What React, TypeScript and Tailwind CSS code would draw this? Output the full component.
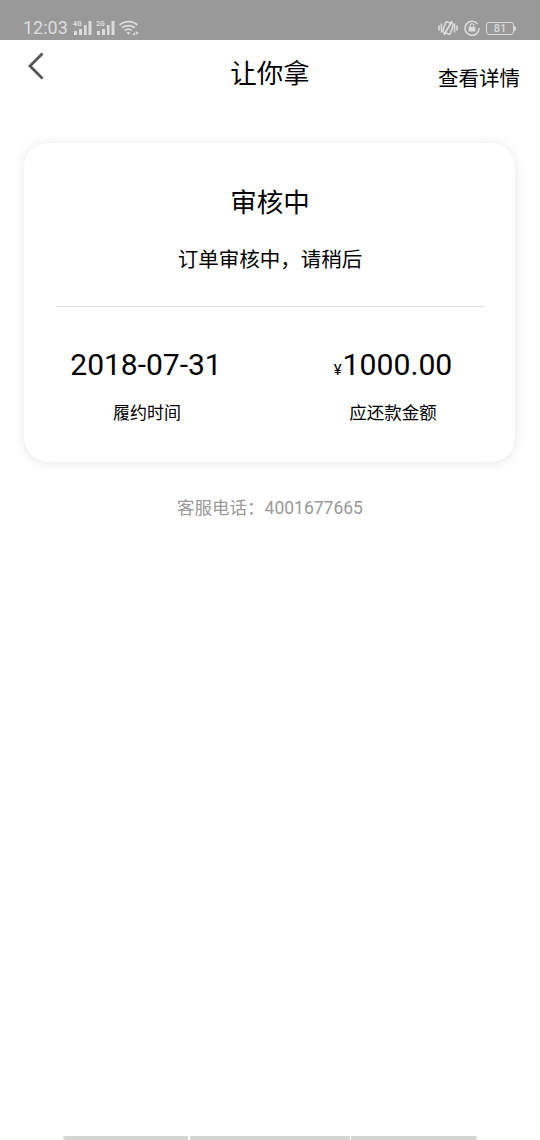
const SignalIcon = ({ label }: { label: string }) => (
  <svg width="19" height="16" viewBox="0 0 19 16" fill="#dcdcdc">
    <text x="0" y="6" fontSize="7" fontWeight="700" fontFamily="Roboto, sans-serif">{label}</text>
    <rect x="1" y="11" width="3" height="4" />
    <rect x="6" y="9" width="3" height="6" />
    <rect x="11" y="5" width="2.6" height="10" />
    <rect x="15.5" y="1" width="3" height="14" />
  </svg>
);

const WifiIcon = () => (
  <svg width="20" height="16" viewBox="0 0 20 16" fill="none" stroke="#dcdcdc" strokeWidth="1.8">
    <path d="M0.6 5C5.5 0.6 13.5 0.6 18.4 5" />
    <path d="M3.2 7.8C6.8 4.8 12.2 4.8 15.8 7.8" />
    <path d="M5.8 10.4C7.8 8.9 10.8 8.9 12.8 10.4" />
    <path d="M9.4 15l-2-2.4c1.2-.8 2.8-.8 4 0z" fill="#dcdcdc" stroke="none" />
    <path d="M13 15l3-3v3zM16.8 11l3 2-3 2z" fill="#dcdcdc" stroke="none" />
  </svg>
);

const VibrateIcon = () => (
  <svg width="20" height="16" viewBox="0 0 20 16" fill="none" stroke="#dcdcdc" strokeWidth="1.6">
    <path d="M1 5.5v5M3.5 3.5v9M16.5 3.5v9M19 5.5v5" />
    <rect x="6" y="2.5" width="8" height="11" rx="1.5" transform="rotate(18 10 8)" />
    <path d="M14 1L6 15" strokeWidth="1.8" />
  </svg>
);

const LockIcon = () => (
  <svg width="16" height="16" viewBox="0 0 16 16" fill="none">
    <path d="M13.5 4A7 7 0 1 0 15 8" stroke="#dcdcdc" strokeWidth="1.5" />
    <rect x="4.6" y="7" width="6.8" height="4.6" rx="0.6" fill="#dcdcdc" />
    <path d="M6.2 7V5.6a1.8 1.8 0 0 1 3.6 0V7" stroke="#dcdcdc" strokeWidth="1.1" />
  </svg>
);

const Battery = () => (
  <div className="flex items-center">
    <div className="w-[28px] h-[13px] rounded-[3px] border border-[#d9d9d9] flex items-center justify-center text-[11px] leading-none text-[#d9d9d9] font-medium">
      81
    </div>
    <div className="w-[2px] h-[5px] bg-[#d9d9d9] rounded-r-sm" />
  </div>
);

export default function App() {
  return (
    <div className="flex flex-col w-[540px] h-[1140px] bg-white overflow-hidden font-['Roboto','Noto_Sans_CJK_SC',sans-serif] text-black">
      {/* status bar */}
      <div className="h-10 shrink-0 bg-[#999999] flex items-center justify-between pt-[16px] pl-[23px] pr-[24px]">
        <div className="flex items-center">
          <span className="text-[18px] leading-none text-[#dcdcdc] mr-[5px]">12:03</span>
          <SignalIcon label="4G" />
          <span className="w-[4px]" />
          <SignalIcon label="2G" />
          <span className="w-[4px]" />
          <WifiIcon />
        </div>
        <div className="flex items-center gap-[6px]">
          <VibrateIcon />
          <LockIcon />
          <Battery />
        </div>
      </div>

      {/* header */}
      <div className="h-[66px] shrink-0 relative flex items-start justify-center">
        <svg width="18" height="28" viewBox="0 0 18 28" fill="none" stroke="#555555" strokeWidth="2.8" className="absolute left-[27px] top-[12px]">
          <path d="M15.5 1.5L3 14l12.5 12.5" />
        </svg>
        <h1 className="text-[26.5px] leading-[38px] mt-[15px] font-normal">让你拿</h1>
        <span className="absolute right-[20px] top-[24px] text-[20.5px] leading-[30px]">查看详情</span>
      </div>

      {/* card */}
      <div className="ml-6 mt-[37px] h-[319px] w-[491px] shrink-0 rounded-[24px] bg-white shadow-[0_1px_12px_rgba(0,0,0,0.1)] flex flex-col items-center pl-8 pr-[31px]">
        <div className="text-[26.5px] leading-[38px] mt-[41px]">审核中</div>
        <div className="text-[20.5px] leading-[30px] mt-[23px]">订单审核中，请稍后</div>
        <div className="w-full h-px bg-[#dddddd] mt-[31px]" />
        <div className="w-full flex justify-between mt-[38px]">
          <div className="w-[180px] flex flex-col items-center">
            <div className="text-[30px] leading-[40px] h-[40px]">2018-07-31</div>
            <div className="text-[17px] leading-[26px] mt-[15px] ml-[2px]">履约时间</div>
          </div>
          <div className="w-[182px] flex flex-col items-center">
            <div className="text-[30.2px] leading-[40px] h-[40px] flex items-baseline">
              <span className="text-[15px] mr-[1px]">¥</span>1000.00
            </div>
            <div className="text-[17.5px] leading-[26px] mt-[15px]">应还款金额</div>
          </div>
        </div>
      </div>

      <div className="text-center text-[17.5px] leading-[26px] text-[#999999] mt-[33px]">客服电话：4001677665</div>

      {/* bottom indicator */}
      <div className="mt-auto flex pl-[63px] h-[4px]">
        <div className="w-[125px] bg-[#d6d6d6] rounded-l-sm" />
        <div className="w-[160px] ml-[2px] bg-[#d6d6d6]" />
        <div className="w-[126px] ml-[1px] bg-[#d6d6d6] rounded-r-sm" />
      </div>
    </div>
  );
}
